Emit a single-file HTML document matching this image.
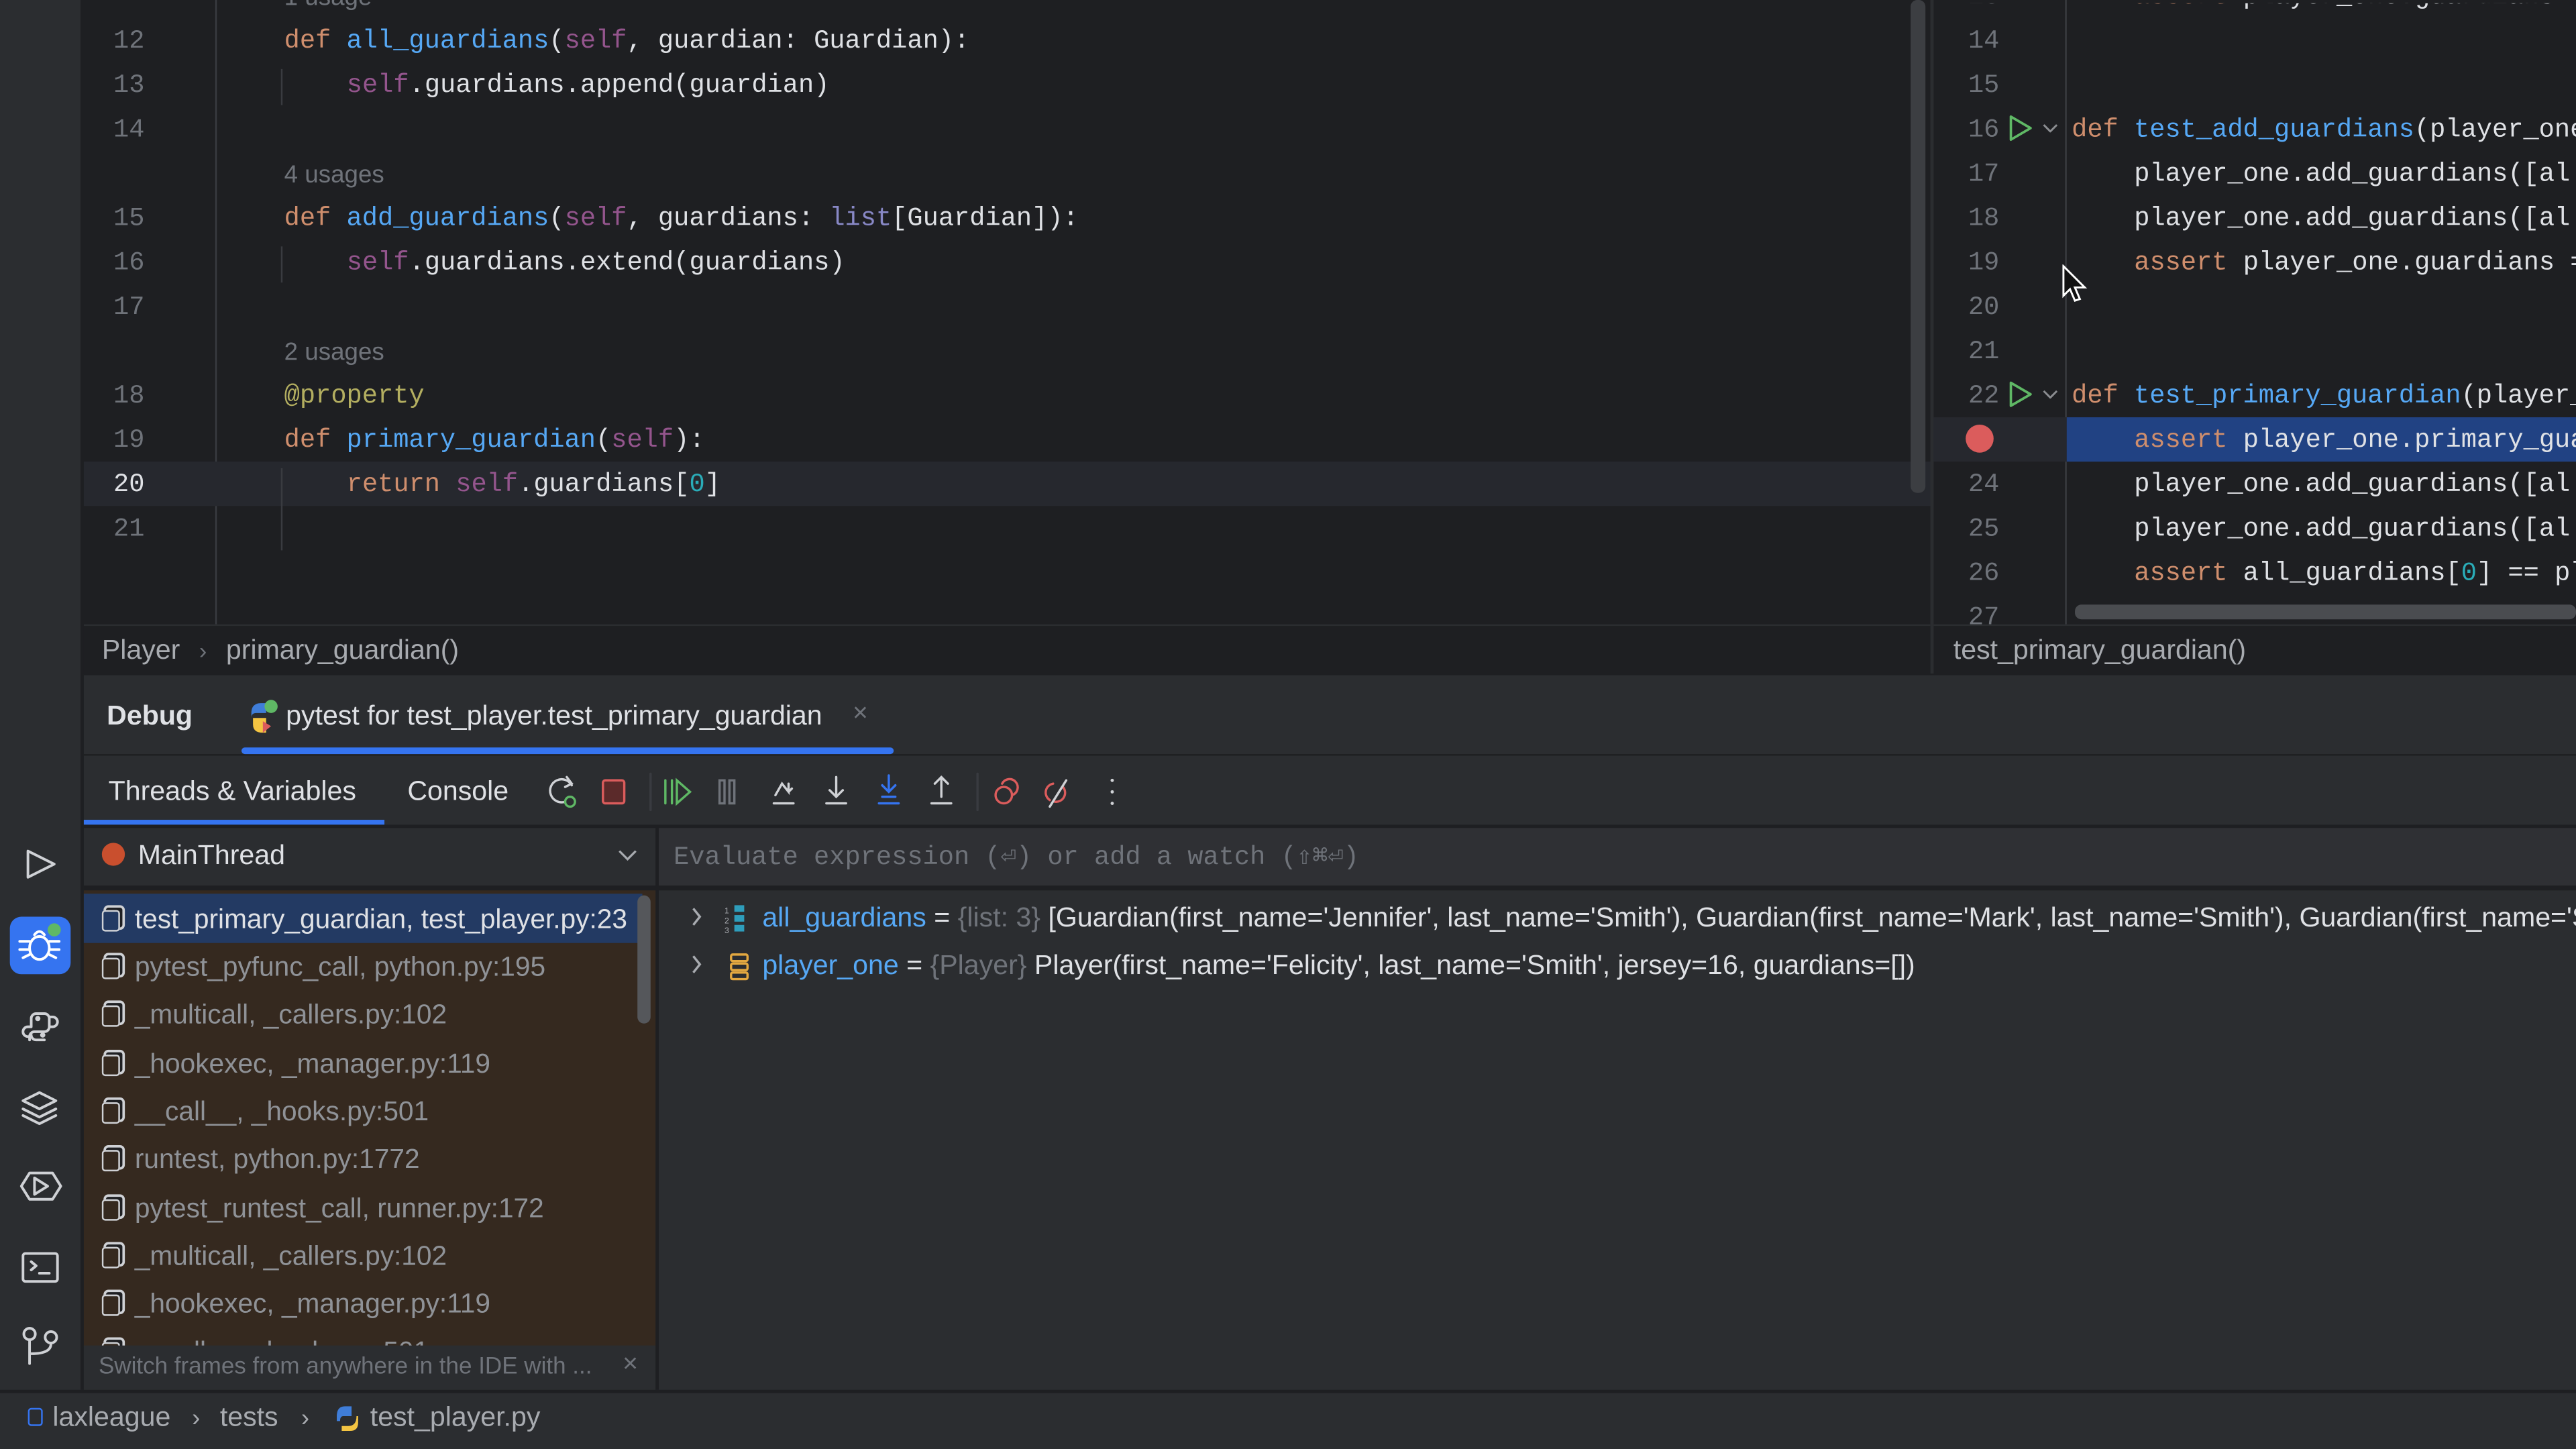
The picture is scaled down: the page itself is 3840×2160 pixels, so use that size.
<!DOCTYPE html>
<html><head><meta charset="utf-8"><style>
*{margin:0;padding:0;box-sizing:border-box}
html,body{width:3840px;height:2160px;overflow:hidden;background:#1e1f22}
#r{position:absolute;left:0;top:0;width:1568px;height:882px;transform:scale(2.44898);transform-origin:0 0;overflow:hidden;background:#1e1f22;font-family:"Liberation Sans",sans-serif;color:#dfe1e5}
.a{position:absolute}
.mono{font-family:"Liberation Mono",monospace;font-size:15.8px;white-space:pre}
.ln{position:absolute;color:#6f737a;text-align:right;width:40px}
.k{color:#cf8e6d}.f{color:#56a8f5}.s{color:#94558d}.d{color:#b3ae60}.n{color:#2aacb8}.b{color:#8888c6}.g{color:#6f737a}
.ui{font-size:16.8px;white-space:nowrap}
.fr{position:absolute;left:50px;width:340px;height:29px;line-height:29px;font-size:16.6px;color:#8f9297;white-space:nowrap}
.fr i{display:inline-block;width:11px;height:13px;border:1.5px solid #cfd1d5;border-radius:2px;margin:0 9px 0 12px;vertical-align:-2px;box-shadow:2px -2px 0 -0.5px #1e1f22,2px -2px 0 1px #cfd1d5}
</style></head><body><div id="r">
<!-- sidebar -->
<div class="a" style="left:0;top:0;width:50px;height:846px;background:#2b2d30;border-right:1px solid #1e1f22"></div>
<svg class="a" style="left:0;top:500px" width="50" height="340" fill="none" stroke="#cfd1d5" stroke-width="1.6" stroke-linejoin="round" stroke-linecap="round">
<path d="M17 18 L33 26 L17 34 Z"/>
<rect x="6" y="58" width="37" height="35" rx="7" fill="#3574f0" stroke="none"/>
<g stroke="#fff"><ellipse cx="24" cy="77" rx="6" ry="7"/><path d="M21 69 q3-4 6 0 M12 73h6 M12 78h6 M14 83l4-2 M30 73h6 M30 78h6 M34 83l-4-2"/></g>
<circle cx="33" cy="66" r="4" fill="#5fb865" stroke="none"/>
<path d="M22 117 h5 a3 3 0 0 1 3 3 v5 a3 3 0 0 1 -3 3 h-6 a3 3 0 0 0 -3 3 v2 M19 125 v-5 a3 3 0 0 1 3 -3 M27 133 h-5 a3 3 0 0 1 -3 -3 M19 125 h-2 a3 3 0 0 0 -3 3 v0 a3 3 0 0 0 3 3 h2 M30 125 h2 a3 3 0 0 0 3 -3 a3 3 0 0 0 -3 -3 h-2"/>
<circle cx="23" cy="120" r="0.8" fill="#cfd1d5"/><circle cx="26" cy="130" r="0.8" fill="#cfd1d5"/>
<path d="M24 165 l10 5 -10 5 -10 -5z M14 175 l10 5 10 -5 M14 179 l10 5 10 -5"/>
<path d="M18 214 h14 l5 8 -5 8 h-14 l-5 -8z M21 217 l8 5 -8 5z"/>
<rect x="14" y="263" width="21" height="17" rx="1.5"/><path d="M19 268 l3 2.5 -3 2.5 M24 275 h6"/>
<circle cx="18" cy="312" r="3.5"/><circle cx="31" cy="314" r="3.5"/><path d="M18 316 v14 M31 318 q0 6 -12 6"/>
</svg>
<!-- left editor -->
<div class="a" style="left:131px;top:0;width:1px;height:380px;background:#393b40"></div>
<div class="a" style="left:51px;top:281px;width:1124px;height:27px;background:#26282e"></div>
<div class="a" style="left:1163px;top:0;width:9px;height:300px;background:#3c3e42;border-radius:4px"></div>
<div class="a mono" style="left:0;top:2px;width:1175px;height:380px;line-height:27px">
<div class="a g" style="left:173px;top:-17px;font-family:'Liberation Sans';font-size:15px">1 usage</div>
<div class="ln" style="left:48px;top:10px">12</div><div class="a" style="left:173px;top:10px"><span class="k">def </span><span class="f">all_guardians</span>(<span class="s">self</span>, guardian: Guardian):</div>
<div class="ln" style="left:48px;top:37px">13</div><div class="a" style="left:211px;top:37px"><span class="s">self</span>.guardians.append(guardian)</div>
<div class="ln" style="left:48px;top:64px">14</div>
<div class="a g" style="left:173px;top:91px;font-family:'Liberation Sans';font-size:15px">4 usages</div>
<div class="ln" style="left:48px;top:118px">15</div><div class="a" style="left:173px;top:118px"><span class="k">def </span><span class="f">add_guardians</span>(<span class="s">self</span>, guardians: <span class="b">list</span>[Guardian]):</div>
<div class="ln" style="left:48px;top:145px">16</div><div class="a" style="left:211px;top:145px"><span class="s">self</span>.guardians.extend(guardians)</div>
<div class="ln" style="left:48px;top:172px">17</div>
<div class="a g" style="left:173px;top:199px;font-family:'Liberation Sans';font-size:15px">2 usages</div>
<div class="ln" style="left:48px;top:226px">18</div><div class="a d" style="left:173px;top:226px">@property</div>
<div class="ln" style="left:48px;top:253px">19</div><div class="a" style="left:173px;top:253px"><span class="k">def </span><span class="f">primary_guardian</span>(<span class="s">self</span>):</div>
<div class="ln" style="left:48px;top:280px;color:#dfe1e5">20</div><div class="a" style="left:211px;top:280px"><span class="k">return </span><span class="s">self</span>.guardians[<span class="n">0</span>]</div>
<div class="ln" style="left:48px;top:307px">21</div>
</div>
<div class="a" style="left:171px;top:42px;width:1px;height:22px;background:#393b40"></div>
<div class="a" style="left:171px;top:150px;width:1px;height:22px;background:#393b40"></div>
<div class="a" style="left:171px;top:285px;width:1px;height:50px;background:#393b40"></div>
<!-- right editor -->
<div class="a" style="left:1175px;top:0;width:2px;height:410px;background:#2b2d30"></div>
<div class="a" style="left:1257px;top:0;width:1px;height:380px;background:#393b40"></div>
<div class="a" style="left:1177px;top:254px;width:391px;height:27px;background:#26282e"></div>
<div class="a" style="left:1258px;top:254px;width:310px;height:27px;background:#214283"></div>
<div class="a" style="left:1263px;top:368px;width:305px;height:9px;background:#4a4c50;border-radius:4px"></div>
<div class="a mono" style="left:1177px;top:2px;width:391px;height:378px;line-height:27px;overflow:hidden">
<div class="ln" style="left:0;top:-17px">13</div><div class="a" style="left:122px;top:-17px"><span class="k">assert </span>player_one.guardians</div>
<div class="ln" style="left:0;top:10px">14</div>
<div class="ln" style="left:0;top:37px">15</div>
<div class="ln" style="left:0;top:64px">16</div><div class="a" style="left:84px;top:64px"><span class="k">def </span><span class="f">test_add_guardians</span>(player_one</div>
<div class="ln" style="left:0;top:91px">17</div><div class="a" style="left:122px;top:91px">player_one.add_guardians([al</div>
<div class="ln" style="left:0;top:118px">18</div><div class="a" style="left:122px;top:118px">player_one.add_guardians([al</div>
<div class="ln" style="left:0;top:145px">19</div><div class="a" style="left:122px;top:145px"><span class="k">assert </span>player_one.guardians =</div>
<div class="ln" style="left:0;top:172px">20</div>
<div class="ln" style="left:0;top:199px">21</div>
<div class="ln" style="left:0;top:226px">22</div><div class="a" style="left:84px;top:226px"><span class="k">def </span><span class="f">test_primary_guardian</span>(player_</div>
<div class="a" style="left:122px;top:253px"><span class="k">assert </span>player_one.primary_gua</div>
<div class="ln" style="left:0;top:280px">24</div><div class="a" style="left:122px;top:280px">player_one.add_guardians([al</div>
<div class="ln" style="left:0;top:307px">25</div><div class="a" style="left:122px;top:307px">player_one.add_guardians([al</div>
<div class="ln" style="left:0;top:334px">26</div><div class="a" style="left:122px;top:334px"><span class="k">assert </span>all_guardians[<span class="n">0</span>] == pl</div>
<div class="ln" style="left:0;top:361px">27</div>
</div>
<svg class="a" style="left:1177px;top:60px" width="90" height="230" fill="none" stroke="#5fb865" stroke-width="1.5" stroke-linejoin="round">
<path d="M47 11 l12 7 -12 7z"/><path d="M47 173 l12 7 -12 7z"/>
<path d="M67 16 l4 4 4-4 M67 178 l4 4 4-4" stroke="#8b8d91" stroke-width="1.2"/>
<circle cx="28" cy="207" r="8.5" fill="#db5c5c" stroke="none"/>
</svg>
<!-- cursor -->
<svg class="a" style="left:1255px;top:161px" width="16" height="26"><path d="M1 1 v18 l4-4 3 7 3-1 -3-7 h6z" fill="#111" stroke="#fff" stroke-width="1.2"/></svg>
<!-- breadcrumbs -->
<div class="a" style="left:51px;top:380px;width:1124px;height:30px;border-top:1px solid #2b2d30;background:#1e1f22"></div>
<div class="a ui" style="left:62px;top:386px;color:#a8abb0">Player <span style="color:#6f737a;font-size:14px;margin:0 7px">›</span> primary_guardian()</div>
<div class="a" style="left:1177px;top:380px;width:391px;height:30px;border-top:1px solid #2b2d30"></div>
<div class="a ui" style="left:1189px;top:386px;color:#a8abb0">test_primary_guardian()</div>
<!-- debug panel -->
<div class="a" style="left:51px;top:410px;width:1517px;height:436px;background:#2b2d30;border-top:1px solid #1e1f22"></div>
<div class="a ui" style="left:65px;top:426px;font-weight:bold;color:#dfe1e5">Debug</div>
<svg class="a" style="left:150px;top:425px" width="20" height="22"><path d="M3 9 q0-6 6-6 h3 v6 h-6 q-3 0-3 3z" fill="#3f7dd8"/><path d="M4 12 h8 v9 h-2 q-6 0-6-5z" fill="#f5c542"/><circle cx="15" cy="5" r="4" fill="#5fb865"/><path d="M10 14 l5 3 -5 4z" fill="#db5c5c"/></svg>
<div class="a ui" style="left:174px;top:426px;color:#dfe1e5">pytest for test_player.test_primary_guardian</div>
<div class="a ui" style="left:519px;top:426px;color:#6f737a;font-size:16px">×</div>
<div class="a" style="left:51px;top:459px;width:1517px;height:1px;background:#1e1f22"></div>
<div class="a" style="left:147px;top:455px;width:397px;height:4px;background:#3574f0;border-radius:2px"></div>
<div class="a ui" style="left:66px;top:472px">Threads &amp; Variables</div>
<div class="a ui" style="left:248px;top:472px">Console</div>
<div class="a" style="left:51px;top:499px;width:183px;height:3px;background:#3574f0"></div>
<div class="a" style="left:51px;top:502px;width:1517px;height:2px;background:#1e1f22"></div>
<svg class="a" style="left:325px;top:468px" width="370" height="28" fill="none" stroke-width="1.4" stroke-linecap="round">
<path d="M23 10 a7 7 0 1 0 -4 10" stroke="#cfd1d5"/><path d="M20 5 l3 4 -4 2" stroke="#cfd1d5"/><circle cx="22" cy="20" r="3" stroke="#5fb865"/>
<rect x="42" y="7" width="13" height="14" rx="1.5" fill="#5b2a2a" stroke="#db5c5c"/>
<path d="M71 3 v22" stroke="#393b40"/>
<path d="M80 7 v14 M84 7 v14 M87 7 l8 7 -8 7z" stroke="#5fb865"/>
<rect x="113" y="7" width="3" height="14" stroke="#6f737a"/><rect x="119" y="7" width="3" height="14" stroke="#6f737a"/>
<path d="M146 21 h12 M147 16 l4-7 4 5 v-5 M155 14 l2-2" stroke="#cfd1d5"/>
<path d="M178 21 h12 M184 5 v12 M180 13 l4 4 4-4" stroke="#cfd1d5"/>
<path d="M210 21 h12 M212 17 h8 M216 4 v10 M212 10 l4 4 4-4" stroke="#3574f0"/>
<path d="M242 21 h12 M248 5 v12 M244 9 l4-4 4 4" stroke="#cfd1d5"/>
<path d="M270 3 v22" stroke="#393b40"/>
<circle cx="286" cy="16" r="5" stroke="#db5c5c"/><path d="M285 9 a5 5 0 1 1 6 7" stroke="#db5c5c"/>
<path d="M316 9 a5.5 5.5 0 0 0 -2 10 M322 11 a5.5 5.5 0 0 1 -5 9" stroke="#db5c5c"/><path d="M314 23 l10-16" stroke="#cfd1d5"/>
<circle cx="352" cy="7" r="1" fill="#cfd1d5" stroke="none"/><circle cx="352" cy="14" r="1" fill="#cfd1d5" stroke="none"/><circle cx="352" cy="21" r="1" fill="#cfd1d5" stroke="none"/>
</svg>
<!-- thread header -->
<div class="a" style="left:399px;top:504px;width:2px;height:342px;background:#1e1f22"></div>
<div class="a" style="left:62px;top:513px;width:14px;height:14px;border-radius:50%;background:#c94f2e"></div>
<div class="a ui" style="left:84px;top:511px">MainThread</div>
<svg class="a" style="left:375px;top:516px" width="14" height="10"><path d="M2 2 l5 5 5-5" fill="none" stroke="#a8abb0" stroke-width="1.3"/></svg>
<div class="a" style="left:401px;top:504px;width:1167px;height:35px;background:#2f3034"></div>
<div class="a mono" style="left:410px;top:511px;color:#6f737a;font-size:15.8px">Evaluate expression (⏎) or add a watch (⇧⌘⏎)</div>
<div class="a" style="left:51px;top:539px;width:1517px;height:3px;background:#1e1f22"></div>
<!-- frames -->
<div class="a" style="left:51px;top:542px;width:348px;height:278px;background:#35291f;overflow:hidden">
<div class="fr" style="left:-1px;top:266px"><i></i>__call__, _hooks.py:501</div>
</div>
<div class="a" style="left:51px;top:544px;width:340px;height:30px;background:#233a63"></div>
<div class="fr" style="top:545px;color:#dfe1e5"><i></i>test_primary_guardian, test_player.py:23</div>
<div class="fr" style="top:574px"><i></i>pytest_pyfunc_call, python.py:195</div>
<div class="fr" style="top:603px"><i></i>_multicall, _callers.py:102</div>
<div class="fr" style="top:633px"><i></i>_hookexec, _manager.py:119</div>
<div class="fr" style="top:662px"><i></i>__call__, _hooks.py:501</div>
<div class="fr" style="top:691px"><i></i>runtest, python.py:1772</div>
<div class="fr" style="top:721px"><i></i>pytest_runtest_call, runner.py:172</div>
<div class="fr" style="top:750px"><i></i>_multicall, _callers.py:102</div>
<div class="fr" style="top:779px"><i></i>_hookexec, _manager.py:119</div>
<div class="a" style="left:388px;top:545px;width:8px;height:78px;background:#55575b;border-radius:4px"></div>
<div class="a" style="left:51px;top:819px;width:348px;height:27px;background:#2b2d30"></div>
<div class="a" style="left:60px;top:824px;font-size:14.3px;color:#6f737a;white-space:nowrap">Switch frames from anywhere in the IDE with ...</div>
<div class="a" style="left:379px;top:822px;font-size:16px;color:#6f737a">×</div>
<!-- variables -->
<svg class="a" style="left:415px;top:548px" width="50" height="52" fill="none" stroke-width="1.4">
<path d="M7 5 l4 5 -4 5 M7 34 l4 5 -4 5" stroke="#a8abb0"/>
<rect x="32" y="3" width="6" height="4" fill="#2e9dbb" stroke="none"/><rect x="32" y="9" width="6" height="4" fill="#2e9dbb" stroke="none"/><rect x="32" y="15" width="6" height="4" fill="#2e9dbb" stroke="none"/>
<text x="26" y="8" font-size="5" fill="#a8abb0" stroke="none" font-family="Liberation Sans">1</text><text x="26" y="14" font-size="5" fill="#a8abb0" stroke="none" font-family="Liberation Sans">2</text><text x="26" y="20" font-size="5" fill="#a8abb0" stroke="none" font-family="Liberation Sans">3</text>
<rect x="30" y="33" width="10" height="4" rx="1" stroke="#e3a840"/><rect x="30" y="38.5" width="10" height="4" rx="1" stroke="#e3a840"/><rect x="30" y="44" width="10" height="4" rx="1" stroke="#e3a840"/>
</svg>
<div class="a ui" style="left:464px;top:549px"><span style="color:#56a8f5">all_guardians</span> = <span style="color:#6f737a">{list: 3}</span> [Guardian(first_name='Jennifer', last_name='Smith'), Guardian(first_name='Mark', last_name='Smith'), Guardian(first_name='Sarah', last_name='Smith')]</div>
<div class="a ui" style="left:464px;top:578px"><span style="color:#56a8f5">player_one</span> = <span style="color:#6f737a">{Player}</span> Player(first_name='Felicity', last_name='Smith', jersey=16, guardians=[])</div>
<!-- status bar -->
<div class="a" style="left:0;top:846px;width:1568px;height:36px;background:#2b2d30;border-top:2px solid #1e1f22"></div>
<div class="a" style="left:17px;top:857px;width:9px;height:11px;border:1.5px solid #3574f0;border-radius:2px"></div>
<div class="a ui" style="left:32px;top:853px;color:#a8abb0">laxleague<span style="margin:0 12px 0 13px;font-size:15px">›</span>tests<span style="margin:0 13px 0 14px;font-size:15px">›</span><span style="display:inline-block;width:24px"></span>test_player.py</div>
<svg class="a" style="left:202px;top:853px" width="18" height="19"><path d="M3 9 q0-6 5-6 h4 v6 h-5 q-2 0-2 3 h-2z" fill="#3f7dd8"/><path d="M15 9 q0 6-5 6 h-4 v3 h5 q5 0 5-5 v-4z M8 11 h6" fill="#f5c542"/></svg>
</div></body></html>
